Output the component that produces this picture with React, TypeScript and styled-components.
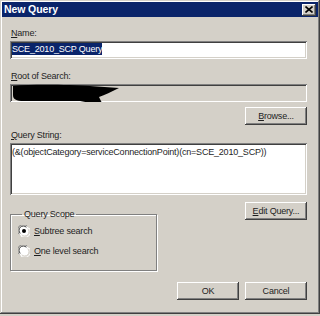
import React from 'react';
import styled, { createGlobalStyle } from 'styled-components';

const GlobalStyle = createGlobalStyle`
  html, body {
    margin: 0;
    padding: 0;
    background: #d4d0c8;
  }

  body {
    font-family: 'Liberation Sans', Arial, sans-serif;
    font-size: 9px;
    letter-spacing: -0.2px;
    color: #1e1e1e;
  }
`;

const Window = styled.div`
  width: 320px;
  height: 314px;
  box-sizing: border-box;
  padding: 2px;
  background: #d4d0c8;
  box-shadow: inset -1px -1px #404040, inset 1px 1px #d4d0c8,
    inset -2px -2px #808080, inset 2px 2px #ffffff;
  display: flex;
  flex-direction: column;
`;

const TitleBar = styled.div`
  height: 15px;
  background: #0a246a;
  display: flex;
  align-items: center;
  justify-content: space-between;
  padding: 0 2px 0 2px;

  h1 {
    margin: 0;
    font-size: 10.5px;
    font-weight: bold;
    letter-spacing: -0.1px;
    color: #ffffff;
    line-height: 15px;
  }
`;

const CloseButton = styled.button`
  width: 14px;
  height: 12px;
  padding: 0;
  border: none;
  background: #d4d0c8;
  box-shadow: inset -1px -1px #404040, inset 1px 1px #ffffff,
    inset -2px -2px #808080;
  display: flex;
  align-items: center;
  justify-content: center;
`;

const Body = styled.div`
  display: flex;
  flex-direction: column;
  padding: 10px 11px 0 8px;
`;

const Label = styled.div<{ $top?: number }>`
  line-height: 13px;
  margin-top: ${({ $top }) => $top ?? 0}px;
  margin-bottom: 1px;
  padding-left: 1px;
`;

const TextBox = styled.div<{ $disabled?: boolean; $height?: number }>`
  position: relative;
  height: ${({ $height }) => $height ?? 18}px;
  box-sizing: border-box;
  padding: 2px 2px;
  background: ${({ $disabled }) => ($disabled ? '#d4d0c8' : '#ffffff')};
  box-shadow: inset 1px 1px #808080, inset -1px -1px #ffffff,
    inset 2px 2px #404040, inset -2px -2px #d4d0c8;
  line-height: 13px;
  white-space: nowrap;
  overflow: hidden;
`;

const Selection = styled.span`
  background: #0a246a;
  color: #ffffff;
  padding: 1px 0 1px;
`;

const QueryText = styled.div`
  padding: 1px 0 0 0;
  letter-spacing: -0.2px;
`;

const Scribble = styled.svg`
  position: absolute;
  left: 0;
  top: 0;
`;

const Button = styled.button`
  width: 62px;
  height: 18px;
  padding: 0;
  border: none;
  background: #d4d0c8;
  font: inherit;
  letter-spacing: inherit;
  color: #1e1e1e;
  line-height: 16px;
  box-shadow: inset -1px -1px #404040, inset 1px 1px #ffffff,
    inset -2px -2px #808080, inset 2px 2px #d4d0c8;
`;

const RightRow = styled.div<{ $top: number }>`
  display: flex;
  justify-content: flex-end;
  margin-top: ${({ $top }) => $top}px;
`;

const ScopeRow = styled.div`
  display: flex;
  justify-content: space-between;
  align-items: flex-start;
  margin-top: 7px;
`;

const GroupBox = styled.fieldset`
  width: 147px;
  box-sizing: border-box;
  margin: 6px 0 0 0;
  padding: 0 7px 9px 7px;
  min-width: 0;
  border: 1px solid #808080;
  box-shadow: inset 1px 1px #ffffff, 1px 1px #ffffff;
  display: flex;
  flex-direction: column;

  legend {
    padding: 0 2px;
    margin-left: 4px;
    line-height: 13px;
  }
`;

const RadioRow = styled.label`
  height: 20px;
  display: flex;
  align-items: center;
  gap: 4px;
  line-height: 13px;
`;

const Footer = styled.div`
  display: flex;
  justify-content: flex-end;
  gap: 6px;
  margin-top: 11px;
`;

function Radio({ checked }: { checked?: boolean }) {
  return (
    <svg width="12" height="12" viewBox="0 0 12 12">
      <circle cx="6" cy="6" r="5.5" fill="#ffffff" />
      <path d="M1.2 9.2 A5.5 5.5 0 0 1 9.2 1.2" fill="none" stroke="#808080" strokeWidth="1" />
      <path d="M2.3 8.4 A4.3 4.3 0 0 1 8.4 2.3" fill="none" stroke="#404040" strokeWidth="1" />
      <path d="M10.8 2.8 A5.5 5.5 0 0 1 2.8 10.8" fill="none" stroke="#ffffff" strokeWidth="1" />
      <path d="M9.7 3.6 A4.3 4.3 0 0 1 3.6 9.7" fill="none" stroke="#d4d0c8" strokeWidth="1" />
      {checked && <circle cx="6" cy="6" r="2" fill="#000000" />}
    </svg>
  );
}

export default function App() {
  return (
    <>
      <GlobalStyle />
      <Window>
        <TitleBar>
          <h1>New Query</h1>
          <CloseButton aria-label="Close">
            <svg width="8" height="7" viewBox="0 0 8 7">
              <path d="M0.5 0.5 L7.5 6.5 M7.5 0.5 L0.5 6.5" stroke="#000" strokeWidth="1.6" />
            </svg>
          </CloseButton>
        </TitleBar>
        <Body>
          <Label>
            <u>N</u>ame:
          </Label>
          <TextBox>
            <Selection>SCE_2010_SCP Query</Selection>
          </TextBox>

          <Label $top={11}>
            <u>R</u>oot of Search:
          </Label>
          <TextBox $disabled>
            <Scribble width="130" height="20" viewBox="0 0 130 20">
              <path
                d="M3 2 C25 0 60 1 80 2 L109 4 C101 8 95 11 89 13 L92 19 C83 20 76 18 70 17 L14 17 C6 17 3 15 3 11 Z"
                fill="#000000"
              />
            </Scribble>
          </TextBox>

          <RightRow $top={5}>
            <Button>
              <u>B</u>rowse...
            </Button>
          </RightRow>

          <Label $top={4}>
            <u>Q</u>uery String:
          </Label>
          <TextBox $height={52}>
            <QueryText>
              (&amp;(objectCategory=serviceConnectionPoint)(cn=SCE_2010_SCP))
            </QueryText>
          </TextBox>

          <ScopeRow>
            <GroupBox>
              <legend>Query Scope</legend>
              <RadioRow>
                <Radio checked />
                <span>
                  <u>S</u>ubtree search
                </span>
              </RadioRow>
              <RadioRow>
                <Radio />
                <span>
                  <u>O</u>ne level search
                </span>
              </RadioRow>
            </GroupBox>
            <Button>
              <u>E</u>dit Query...
            </Button>
          </ScopeRow>

          <Footer>
            <Button>OK</Button>
            <Button>Cancel</Button>
          </Footer>
        </Body>
      </Window>
    </>
  );
}
